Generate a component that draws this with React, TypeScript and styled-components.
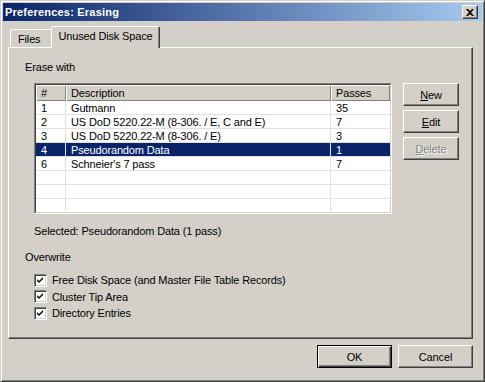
import React from "react"
import styled, { createGlobalStyle, css } from "styled-components"

const GlobalStyle = createGlobalStyle`
  html, body {
    margin: 0;
    padding: 0;
    background: #d4d0c8;
  }
  body {
    font-family: "Liberation Sans", Arial, sans-serif;
    font-size: 11px;
    letter-spacing: -0.15px;
    color: #000;
  }
`

const raised = css`
  border: 1px solid;
  border-color: #fff #404040 #404040 #fff;
  box-shadow: inset -1px -1px #808080, inset 1px 1px #d4d0c8;
`

const Window = styled.div`
  width: 485px;
  height: 382px;
  box-sizing: border-box;
  background: #d4d0c8;
  border: 1px solid;
  border-color: #d4d0c8 #404040 #404040 #d4d0c8;
  box-shadow: inset 1px 1px #fff, inset -1px -1px #808080;
  padding: 2px;
  display: flex;
  flex-direction: column;
`

const TitleBar = styled.div`
  height: 18px;
  display: flex;
  align-items: center;
  justify-content: space-between;
  padding: 0 4px 0 2px;
  background: linear-gradient(to right, #0a246a, #a6caf0);
`

const TitleText = styled.span`
  color: #fff;
  font-weight: bold;
  font-size: 11px;
  letter-spacing: 0.2px;
`

const CloseButton = styled.div`
  width: 16px;
  height: 14px;
  box-sizing: border-box;
  background: #d4d0c8;
  ${raised};
  display: flex;
  align-items: center;
  justify-content: center;
`

const Body = styled.div`
  flex: 1;
  display: flex;
  flex-direction: column;
  padding: 6px 9px 0 5px;
`

const TabRow = styled.div`
  display: flex;
  align-items: flex-end;
  height: 21px;
  padding-left: 2px;
  position: relative;
  z-index: 1;
  margin-bottom: -1px;
`

const Tab = styled.div<{ active?: boolean }>`
  box-sizing: border-box;
  height: ${({ active }) => (active ? 22 : 18)}px;
  padding: ${({ active }) => (active ? "2px 6px 0 6px" : "2px 11px 0 7px")};
  background: #d4d0c8;
  border: 1px solid;
  border-bottom: none;
  border-color: #fff #404040 transparent #fff;
  border-radius: 2px 2px 0 0;
  box-shadow: inset -1px 0 #808080;
  line-height: 14px;
  ${({ active }) =>
    !active &&
    css`
      margin-bottom: 1px;
      border-right: none;
      box-shadow: none;
    `}
`

const Panel = styled.div`
  box-sizing: border-box;
  height: 292px;
  background: #d4d0c8;
  border: 1px solid;
  border-color: #fff #404040 #404040 #fff;
  box-shadow: inset -1px -1px #808080;
  padding: 13px 0 0 16px;
  display: flex;
  flex-direction: column;
`

const Label = styled.div<{ gapAbove?: number }>`
  line-height: 13px;
  margin-top: ${({ gapAbove }) => gapAbove ?? 0}px;
`

const ListArea = styled.div`
  display: flex;
  gap: 11px;
  margin: 9px 0 0 9px;
`

const ListOuter = styled.div`
  width: 358px;
  height: 131px;
  box-sizing: border-box;
  border: 1px solid;
  border-color: #808080 #fff #fff #808080;
`

const ListInner = styled.div`
  height: 100%;
  box-sizing: border-box;
  border: 1px solid;
  border-color: #404040 #d4d0c8 #d4d0c8 #404040;
  background: #fff;
  overflow: hidden;
  display: grid;
  grid-template-columns: 30px 265px 1fr;
  grid-auto-rows: 14px;
  grid-template-rows: 16px;
`

const HeadCell = styled.div`
  background: #d4d0c8;
  box-shadow: inset 1px 1px #fff, inset -1px -1px #808080;
  padding: 1px 0 0 5px;
  line-height: 15px;
  white-space: nowrap;
`

const Cell = styled.div<{ selected?: boolean; last?: boolean }>`
  box-sizing: border-box;
  padding: 1px 0 0 5px;
  line-height: 13px;
  white-space: nowrap;
  overflow: hidden;
  border-bottom: 1px solid #e3e1dc;
  border-right: ${({ last }) => (last ? "none" : "1px solid #e3e1dc")};
  background: ${({ selected }) => (selected ? "#0a246a" : "#fff")};
  color: ${({ selected }) => (selected ? "#fff" : "#000")};
`

const SideButtons = styled.div`
  display: flex;
  flex-direction: column;
  gap: 4px;
`

const Button = styled.div<{ width: number; disabled?: boolean; isDefault?: boolean }>`
  width: ${({ width }) => width}px;
  height: 23px;
  box-sizing: border-box;
  background: #d4d0c8;
  display: flex;
  align-items: center;
  justify-content: center;
  ${raised};
  ${({ isDefault }) =>
    isDefault &&
    css`
      border-color: #000;
      box-shadow: inset 1px 1px #fff, inset -1px -1px #404040,
        inset -2px -2px #808080;
    `}
  ${({ disabled }) =>
    disabled &&
    css`
      color: #808080;
      text-shadow: 1px 1px #fff;
    `}

  u {
    text-decoration: underline;
    text-underline-offset: 1px;
  }
`

const Status = styled.div`
  margin: 11px 0 0 9px;
  line-height: 13px;
`

const Checks = styled.div`
  display: flex;
  flex-direction: column;
  margin: 8px 0 0 9px;
`

const CheckRow = styled.div`
  display: flex;
  align-items: center;
  gap: 5px;
  height: 16.5px;
`

const Box = styled.div`
  width: 13px;
  height: 13px;
  box-sizing: border-box;
  border: 1px solid;
  border-color: #808080 #fff #fff #808080;
  box-shadow: inset 1px 1px #404040, inset -1px -1px #d4d0c8;
  background: #fff;
  display: flex;
  align-items: center;
  justify-content: center;
`

const Footer = styled.div`
  display: flex;
  justify-content: flex-end;
  gap: 6px;
  margin-top: 6px;
`

const rows = [
  { id: "1", desc: "Gutmann", passes: "35" },
  { id: "2", desc: "US DoD 5220.22-M (8-306. / E, C and E)", passes: "7" },
  { id: "3", desc: "US DoD 5220.22-M (8-306. / E)", passes: "3" },
  { id: "4", desc: "Pseudorandom Data", passes: "1", selected: true },
  { id: "6", desc: "Schneier's 7 pass", passes: "7" },
  { id: "", desc: "", passes: "" },
  { id: "", desc: "", passes: "" },
  { id: "", desc: "", passes: "" },
]

const Check = () => (
  <Box>
    <svg width="7" height="7" viewBox="0 0 7 7">
      <path d="M0 2 L2 4 L6 0 L6 2 L2 6 L0 4 Z" fill="#000" />
    </svg>
  </Box>
)

export default function App() {
  return (
    <>
      <GlobalStyle />
      <Window>
        <TitleBar>
          <TitleText>Preferences: Erasing</TitleText>
          <CloseButton>
            <svg width="8" height="7" viewBox="0 0 8 7">
              <path
                d="M0 0h2l2 2 2-2h2L5 3.5 8 7H6L4 5 2 7H0l3-3.5z"
                fill="#000"
              />
            </svg>
          </CloseButton>
        </TitleBar>
        <Body>
          <TabRow>
            <Tab>Files</Tab>
            <Tab active>Unused Disk Space</Tab>
          </TabRow>
          <Panel>
            <Label>Erase with</Label>
            <ListArea>
              <ListOuter>
                <ListInner>
                  <HeadCell>#</HeadCell>
                  <HeadCell>Description</HeadCell>
                  <HeadCell>Passes</HeadCell>
                  {rows.map((r, i) => (
                    <React.Fragment key={i}>
                      <Cell selected={r.selected}>{r.id}</Cell>
                      <Cell selected={r.selected}>{r.desc}</Cell>
                      <Cell selected={r.selected} last>
                        {r.passes}
                      </Cell>
                    </React.Fragment>
                  ))}
                </ListInner>
              </ListOuter>
              <SideButtons>
                <Button width={56}>
                  <span>
                    <u>N</u>ew
                  </span>
                </Button>
                <Button width={56}>
                  <span>
                    <u>E</u>dit
                  </span>
                </Button>
                <Button width={56} disabled>
                  <span>
                    <u>D</u>elete
                  </span>
                </Button>
              </SideButtons>
            </ListArea>
            <Status>Selected: Pseudorandom Data (1 pass)</Status>
            <Label gapAbove={13}>Overwrite</Label>
            <Checks>
              <CheckRow>
                <Check />
                <span>Free Disk Space (and Master File Table Records)</span>
              </CheckRow>
              <CheckRow>
                <Check />
                <span>Cluster Tip Area</span>
              </CheckRow>
              <CheckRow>
                <Check />
                <span>Directory Entries</span>
              </CheckRow>
            </Checks>
          </Panel>
          <Footer>
            <Button width={75} isDefault>
              OK
            </Button>
            <Button width={75}>Cancel</Button>
          </Footer>
        </Body>
      </Window>
    </>
  )
}
